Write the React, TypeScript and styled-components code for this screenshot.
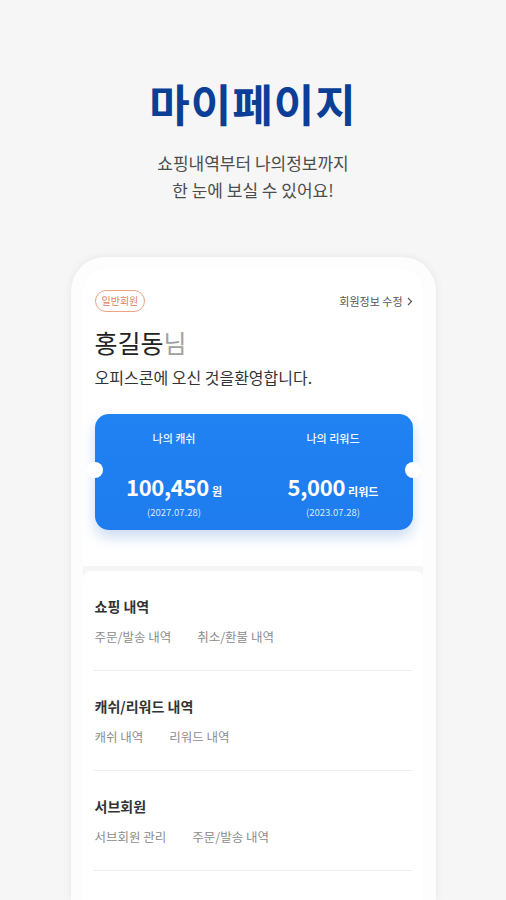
import React from "react";
import styled, { createGlobalStyle } from "styled-components";

const GlobalStyle = createGlobalStyle`
  html, body {
    margin: 0;
    padding: 0;
    background: #f6f6f6;
  }
  * {
    box-sizing: border-box;
  }
  body {
    font-family: "Noto Sans CJK KR", "Noto Sans", sans-serif;
  }
`;

const Page = styled.div`
  width: 506px;
  height: 900px;
  overflow: hidden;
  display: flex;
  flex-direction: column;
  align-items: center;
  background: #f6f6f6;
`;

const Title = styled.h1`
  margin: 77px 0 0;
  font-size: 44px;
  line-height: 52px;
  font-weight: 700;
  color: #0b3e97;
  letter-spacing: 1px;
`;

const Subtitle = styled.p`
  margin: 20px 0 0;
  font-size: 17px;
  line-height: 27px;
  color: #4d4d4d;
  text-align: center;
`;

const PhoneFrame = styled.div`
  margin-top: 54px;
  width: 365px;
  flex: 1;
  padding: 11px 13px 0 12px;
  border-radius: 34px 34px 0 0;
  background: #fdfdfd;
  box-shadow: 0 0 8px rgba(0, 0, 0, 0.07);
`;

const Screen = styled.div`
  height: 100%;
  border-radius: 22px 22px 0 0;
  background: #f5f5f5;
  overflow: hidden;
  display: flex;
  flex-direction: column;
  gap: 5px;
`;

const Card = styled.section<{ $pad: string }>`
  background: #ffffff;
  padding: ${(p) => p.$pad};
`;

const ProfileCard = styled(Card)`
  border-radius: 22px 22px 0 0;
`;

const ListCard = styled(Card)`
  flex: 1;
  border-radius: 8px 8px 0 0;
`;

const HeaderRow = styled.div`
  display: flex;
  align-items: center;
  justify-content: space-between;
`;

const Badge = styled.span`
  height: 22px;
  padding: 0 6px;
  border: 1px solid #eba384;
  border-radius: 11px;
  font-size: 10px;
  line-height: 20px;
  color: #e0835c;
`;

const EditLink = styled.span`
  font-size: 11px;
  color: #555;
  display: flex;
  align-items: center;
  gap: 4px;
`;

const Name = styled.div`
  margin-top: 14px;
  font-size: 25px;
  line-height: 32px;
  color: #222;
  font-weight: 400;
`;

const Honor = styled.span`
  color: #a0a0a0;
`;

const Welcome = styled.div`
  margin-top: 8px;
  font-size: 16px;
  line-height: 22px;
  color: #333;
`;

const Ticket = styled.div`
  position: relative;
  margin-top: 26px;
  height: 116px;
  border-radius: 14px;
  background: linear-gradient(180deg, #2182f2 0%, #1e7cee 100%);
  box-shadow: 0 7px 14px rgba(20, 90, 190, 0.22);
  display: grid;
  grid-template-columns: 1fr 1fr;
  color: #fff;

  &::before,
  &::after {
    content: "";
    position: absolute;
    top: 50%;
    width: 16px;
    height: 16px;
    margin-top: -10px;
    border-radius: 50%;
    background: #fff;
  }
  &::before {
    left: -8px;
  }
  &::after {
    right: -8px;
  }
`;

const TicketCol = styled.div`
  display: flex;
  flex-direction: column;
  align-items: center;
  padding-top: 16px;
`;

const TicketLabel = styled.div`
  font-size: 11px;
  line-height: 16px;
  font-weight: 500;
  opacity: 0.95;
`;

const Amount = styled.div`
  margin-top: 26px;
  display: flex;
  align-items: baseline;
  gap: 3px;
  line-height: 28px;
`;

const AmountNum = styled.span`
  font-size: 22px;
  font-weight: 700;
  letter-spacing: -0.3px;
`;

const AmountUnit = styled.span`
  font-size: 11px;
  font-weight: 600;
`;

const Expiry = styled.div`
  font-size: 9.5px;
  line-height: 14px;
  color: rgba(255, 255, 255, 0.85);
`;

const Section = styled.div`
  padding: 25px 2px 24px;
  border-bottom: 1px solid #efefef;
`;

const SectionTitle = styled.div`
  font-size: 14px;
  line-height: 20px;
  font-weight: 600;
  color: #333;
`;

const LinkRow = styled.div`
  margin-top: 12px;
  display: flex;
  gap: 26px;
`;

const SubLink = styled.span`
  font-size: 12.5px;
  line-height: 18px;
  color: #8c8c8c;
`;

const sections = [
  { title: "쇼핑 내역", links: ["주문/발송 내역", "취소/환불 내역"] },
  { title: "캐쉬/리워드 내역", links: ["캐쉬 내역", "리워드 내역"] },
  { title: "서브회원", links: ["서브회원 관리", "주문/발송 내역"] },
];

export default function App() {
  return (
    <Page>
      <GlobalStyle />
      <Title>마이페이지</Title>
      <Subtitle>
        쇼핑내역부터 나의정보까지
        <br />한 눈에 보실 수 있어요!
      </Subtitle>
      <PhoneFrame>
        <Screen>
          <ProfileCard $pad="22px 10px 36px 12px">
            <HeaderRow>
              <Badge>일반회원</Badge>
              <EditLink>
                회원정보 수정
                <svg width="6" height="9" viewBox="0 0 6 9" fill="none">
                  <path d="M1 1l3.5 3.5L1 8" stroke="#555" strokeWidth="1.1" />
                </svg>
              </EditLink>
            </HeaderRow>
            <Name>
              홍길동<Honor>님</Honor>
            </Name>
            <Welcome>오피스콘에 오신 것을환영합니다.</Welcome>
            <Ticket>
              <TicketCol>
                <TicketLabel>나의 캐쉬</TicketLabel>
                <Amount>
                  <AmountNum>100,450</AmountNum>
                  <AmountUnit>원</AmountUnit>
                </Amount>
                <Expiry>(2027.07.28)</Expiry>
              </TicketCol>
              <TicketCol>
                <TicketLabel>나의 리워드</TicketLabel>
                <Amount>
                  <AmountNum>5,000</AmountNum>
                  <AmountUnit>리워드</AmountUnit>
                </Amount>
                <Expiry>(2023.07.28)</Expiry>
              </TicketCol>
            </Ticket>
          </ProfileCard>
          <ListCard $pad="0 10px">
            {sections.map((s) => (
              <Section key={s.title}>
                <SectionTitle>{s.title}</SectionTitle>
                <LinkRow>
                  {s.links.map((l) => (
                    <SubLink key={l}>{l}</SubLink>
                  ))}
                </LinkRow>
              </Section>
            ))}
          </ListCard>
        </Screen>
      </PhoneFrame>
    </Page>
  );
}
